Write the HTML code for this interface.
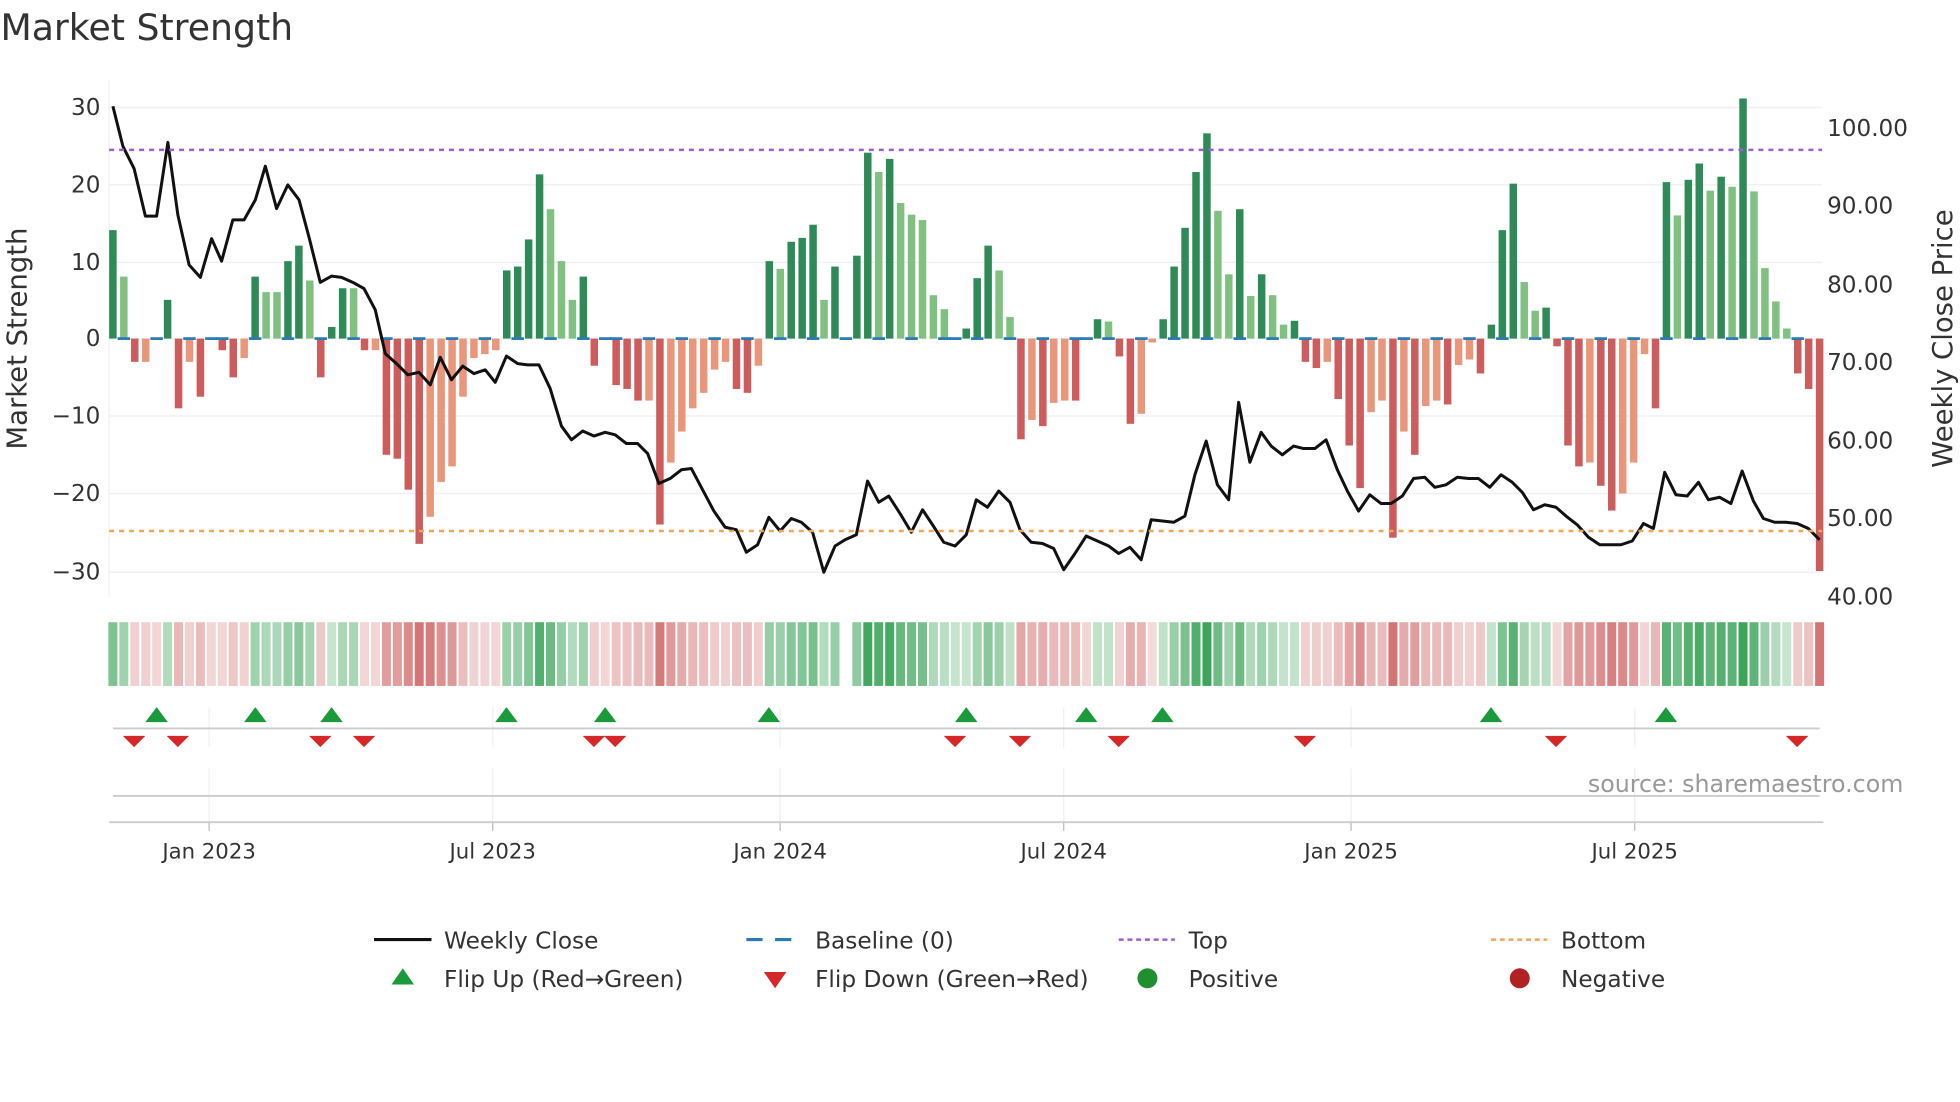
<!DOCTYPE html>
<html><head><meta charset="utf-8"><style>
html,body{margin:0;padding:0;background:#fff;width:1960px;height:1102px;overflow:hidden}
svg{display:block;font-family:"DejaVu Sans","Liberation Sans",sans-serif}
</style></head><body>
<svg id="s" width="1960" height="1102" viewBox="0 0 1568 882" xmlns="http://www.w3.org/2000/svg">
<text x="0" y="32" font-size="29" fill="#333">Market Strength</text>
<g id="grid"></g>
<g id="bars"></g>
<g id="heat"></g>
<g id="mk"></g>
<polyline id="price" fill="none" stroke="#111" stroke-width="2.4" stroke-linejoin="round"/>
<line x1="87" y1="120" x2="1458" y2="120" stroke="#9b5fd6" stroke-width="2" stroke-dasharray="4,4"/>
<line x1="87" y1="425" x2="1458" y2="425" stroke="#eea65a" stroke-width="2" stroke-dasharray="4,4"/>
<g font-size="18.5" fill="#333">
<text x="80" y="92" text-anchor="end">30</text>
<text x="80" y="154" text-anchor="end">20</text>
<text x="80" y="216" text-anchor="end">10</text>
<text x="80" y="277" text-anchor="end">0</text>
<text x="80" y="339" text-anchor="end">−10</text>
<text x="80" y="401" text-anchor="end">−20</text>
<text x="80" y="464" text-anchor="end">−30</text>
<text x="1462" y="109">100.00</text>
<text x="1462" y="171">90.00</text>
<text x="1462" y="234">80.00</text>
<text x="1462" y="296">70.00</text>
<text x="1462" y="359">60.00</text>
<text x="1462" y="421">50.00</text>
<text x="1462" y="484">40.00</text>
</g>
<text transform="translate(21,271) rotate(-90)" font-size="22" fill="#333" text-anchor="middle">Market Strength</text>
<text transform="translate(1562,271) rotate(-90)" font-size="22" fill="#333" text-anchor="middle">Weekly Close Price</text>
<text x="1523" y="634" font-size="19" fill="#999" text-anchor="end">source: sharemaestro.com</text>
<g font-size="17" fill="#333" text-anchor="middle">
<text x="167" y="687">Jan 2023</text><text x="394" y="687">Jul 2023</text><text x="624" y="687">Jan 2024</text>
<text x="851" y="687">Jul 2024</text><text x="1081" y="687">Jan 2025</text><text x="1308" y="687">Jul 2025</text>
</g>
<g font-size="18.6" fill="#333">
<line x1="299" y1="752" x2="345" y2="752" stroke="#111" stroke-width="2.5"/><text x="355" y="759">Weekly Close</text>
<line x1="597" y1="752" x2="642" y2="752" stroke="#2a7ab5" stroke-width="2.5" stroke-dasharray="13,10"/><text x="652" y="759">Baseline (0)</text>
<line x1="895" y1="752" x2="940" y2="752" stroke="#9b5fd6" stroke-width="2" stroke-dasharray="4,3"/><text x="951" y="759">Top</text>
<line x1="1193" y1="752" x2="1238" y2="752" stroke="#eea65a" stroke-width="2" stroke-dasharray="4,3"/><text x="1249" y="759">Bottom</text>
<polygon points="313,788 331,788 322,775" fill="#1a9a3a"/><text x="355" y="790">Flip Up (Red→Green)</text>
<polygon points="611,778 629,778 620,791" fill="#d62728"/><text x="652" y="790">Flip Down (Green→Red)</text>
<circle cx="918" cy="783" r="8" fill="#1f8f2f"/><text x="951" y="790">Positive</text>
<circle cx="1216" cy="783" r="8" fill="#b22222"/><text x="1249" y="790">Negative</text>
</g>
</svg>
<script>
var NS="http://www.w3.org/2000/svg";
function el(p,t,a){var e=document.createElementNS(NS,t);for(var k in a)e.setAttribute(k,a[k]);document.getElementById(p).appendChild(e);return e;}
var raw="14d 8l -3r -3s 0z 5d -9r -3s -7.5r 0z -1.5r -5r -2.5s 8d 6l 6l 10d 12d 7.5l -5r 1.5d 6.5d 6.5l -1.5r -1.5s -15r -15.5r -19.5r -26.5r -23s -18.5s -16.5s -7.5s -2.5s -2s -1.5s 8.8d 9.3d 12.8d 21.2d 16.7l 10l 5l 8d -3.5r 0z -6r -6.5r -8r -8s -24r -16s -12s -9s -7s -4s -3s -6.5r -7r -3.5s 10d 9l 12.5d 13d 14.7d 5l 9.3d 0z 10.7d 24d 21.5l 23.2d 17.5l 16l 15.3l 5.6l 3.8l 0z 1.3d 7.8d 12d 8.8l 2.8l -13r -10.5s -11.3r -8.3s -8s -8r 0z 2.5d 2.2l -2.3r -11r -9.7s -0.5s 2.5d 9.3d 14.3d 21.5d 26.5d 16.5l 8.3l 16.7d 5.5l 8.3d 5.6l 1.8l 2.3d -3r -3.8r -3s -7.8r -13.8r -19.3r -9.5s -8s -25.7r -12s -15r -8.7s -8s -8.5r -3.4s -2.7s -4.5r 1.8d 14d 20d 7.3l 3.6l 4d -1r -13.8r -16.5r -16s -19r -22.2r -20s -16s -2s -9r 20.2d 15.9l 20.5d 22.6d 19.1l 20.9d 19.6l 31d 19l 9.1l 4.8l 1.3l -4.5r -6.5r -30r".split(" ");
var n=raw.length,x0=90,x1=1456,dx=(x1-x0)/(n-1);
var col={d:"#2e8b57",l:"#80c080",r:"#cd5c5c",s:"#e9967a"};
[86,148,210,271,333,395,458].forEach(function(y){el("grid","line",{x1:87,x2:1458,y1:y,y2:y,stroke:"#eef0f4","stroke-width":1.2});});
[167,394,624,851,1081,1308].forEach(function(x){el("grid","line",{x1:x,x2:x,y1:566,y2:598,stroke:"#eef0f4"});el("grid","line",{x1:x,x2:x,y1:615,y2:658,stroke:"#eef0f4"});el("grid","line",{x1:x,x2:x,y1:658,y2:665,stroke:"#bbb"});});
el("grid","line",{x1:87,x2:87,y1:64,y2:478,stroke:"#eef0f4"});
el("grid","line",{x1:90,x2:1456,y1:583,y2:583,stroke:"#ccc","stroke-width":1.5});
el("grid","line",{x1:90,x2:1456,y1:637,y2:637,stroke:"#ccc","stroke-width":1.5});
el("grid","line",{x1:87,x2:1459,y1:658,y2:658,stroke:"#ccc","stroke-width":1.5});
var prev=0;
for(var i=0;i<n;i++){
 var v=parseFloat(raw[i]),t=raw[i].slice(-1),x=x0+i*dx,y=271-v*6.2;
 if(t=="z"){el("bars","line",{x1:x-5,x2:x+5,y1:271,y2:271,stroke:"#2a7ab5","stroke-width":2.2});}
 else{el("bars","rect",{x:x-3,y:Math.min(y,271),width:6,height:Math.abs(v*6.2),fill:col[t]});
  if(i%3==1)el("bars","line",{x1:x-5,x2:x+5,y1:271,y2:271,stroke:"#2a7ab5","stroke-width":2.2});}
 var a=Math.min(1,0.25+Math.abs(v)/30*0.9),c;
 if(v>0){c="rgba(60,165,90,"+a+")";prev=1;}else if(v<0){c="rgba(205,92,92,"+(a*0.85)+")";prev=-1;}
 else{c=(i==67)?"#fff":(prev>0?"rgba(60,165,90,0.3)":"rgba(205,92,92,0.25)");}
 el("heat","rect",{x:x-3.6,y:498,width:7.2,height:51,fill:c});
}
var p="90,85 98,117 107,135 116,173 125,173 134,114 142,172 151,212 160,222 169,191 177,209 186,176 195,176 204,160 212,133 221,167 230,148 239,160 247,190 256,226 265,221 273,222 282,226 291,231 300,248 308,283 317,291 326,300 335,298 344,308 352,286 361,304 370,293 379,299 388,296 396,306 405,285 414,291 422,292 431,292 440,311 449,341 457,352 466,345 475,349 484,346 492,348 501,355 510,355 518,363 527,387 536,383 545,376 553,375 562,392 571,409 580,422 589,424 597,442 606,436 615,414 624,425 633,415 641,418 650,426 659,458 668,437 676,432 685,428 694,385 703,402 711,397 720,411 729,426 738,408 746,420 755,434 764,437 773,428 781,400 790,406 799,393 808,402 816,424 825,434 834,435 843,439 851,456 860,443 869,429 878,433 887,437 895,443 904,438 913,448 921,416 930,417 939,418 948,413 956,380 965,353 974,388 983,400 991,322 1000,370 1009,346 1017,357 1026,364 1035,357 1043,359 1052,359 1061,352 1070,376 1078,393 1087,409 1096,396 1105,403 1113,403 1122,397 1131,383 1140,382 1148,390 1157,388 1166,382 1175,383 1183,383 1192,390 1201,380 1210,386 1218,394 1227,408 1236,404 1245,406 1253,413 1262,420 1271,430 1280,436 1288,436 1297,436 1306,433 1315,419 1323,423 1332,378 1341,396 1350,397 1359,386 1367,400 1376,398 1385,403 1394,377 1403,401 1411,415 1420,418 1429,418 1438,419 1447,423 1456,432";
document.getElementById("price").setAttribute("points",p);
[125,204,265,405,484,615,773,869,930,1193,1333].forEach(function(x){el("mk","polygon",{points:(x-9)+",578 "+(x+9)+",578 "+x+",566",fill:"#1a9a3a"});});
[107,142,256,291,475,492,764,816,895,1044,1245,1438].forEach(function(x){el("mk","polygon",{points:(x-9)+",589 "+(x+9)+",589 "+x+",598",fill:"#d62728"});});
</script>
</body></html>
